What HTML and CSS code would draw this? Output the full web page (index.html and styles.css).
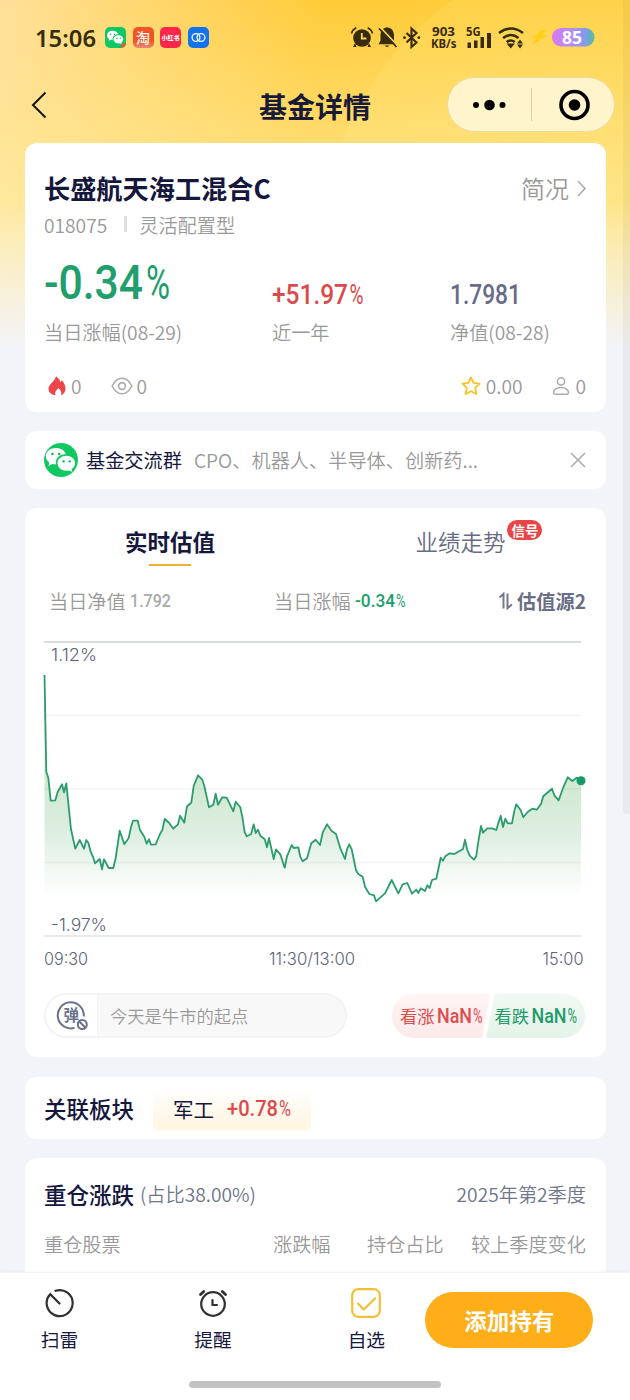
FILE: index.html
```
<!DOCTYPE html>
<html lang="zh-CN">
<head>
    <meta charset="UTF-8">
    <meta name="viewport" content="width=device-width, initial-scale=1.0">
    <title>基金详情</title>
    <link rel="stylesheet" href="styles.css">
</head>
<body>
    <svg class="defs" width="0" height="0" aria-hidden="true">
        <symbol id="wechat" viewBox="0 0 34 34">
            <circle cx="17" cy="17" r="17" fill="#10c862"/>
            <path fill="#fff" d="M11.5 5C5.700 5 1.800 8.700 1.800 13.200c0 2.600 1.400 4.900 3.500 6.300l-.9 3.500 3.900-2.100c1.200.3 2.500.4 3.700.3-1-6.100 4-10.200 9.900-9.900C21 7.500 16.700 5 11.500 5z"/>
            <path fill="#fff" d="M22.400 12.800c-5 0-8.900 3.300-8.900 7.500s3.900 7.500 8.900 7.500c1 0 2-.1 2.900-.4l3 1.600-.8-2.900c2.200-1.400 3.600-3.500 3.600-5.800 0-4.200-3.900-7.500-8.700-7.500z"/>
            <g fill="#10b75a"><circle cx="8.400" cy="11" r="1.300"/><circle cx="15.200" cy="11" r="1.300"/><circle cx="19.600" cy="18.400" r="1.200"/><circle cx="25.600" cy="18.400" r="1.200"/></g>
        </symbol>
    </svg>

    <header>
        <div class="status-bar">
            <svg class="clock" width="62" height="34"><text x="0" y="23.500" textLength="61" lengthAdjust="spacingAndGlyphs">15:06</text></svg>
            <div class="apps">
                <span class="app app-wechat">
                    <svg width="21" height="21" viewBox="-2 -2 38 38"><use href="#wechat" width="34" height="34"/></svg>
                    <i></i>
                </span>
                <span class="app app-tao">淘</span>
                <span class="app app-red">小红书</span>
                <span class="app app-blue">
                    <svg width="21" height="21" viewBox="0 0 21 21" fill="none" stroke="#fff" stroke-width="1.300"><circle cx="8" cy="10.500" r="3.900"/><circle cx="13" cy="10.500" r="3.900"/></svg>
                </span>
            </div>
            <svg class="signals" width="245" height="30" viewBox="350 23 245 30">
                <g fill="#372c0b">
                    <circle cx="362" cy="38" r="8.800"/>
                    <path d="M355 43l-2 4h3.500zM369 43l2 4h-3.500z"/>
                    <path d="M351.500 33.500q1-4 4.800-5.800M372.500 33.500q-1-4-4.800-5.800" fill="none" stroke="#372c0b" stroke-width="1.700"/>
                    <path d="M361.800 33v5.500h4.600" fill="none" stroke="#ffd658" stroke-width="1.800"/>
                    <path d="M387 27.200c-4.500.7-6.500 4.200-6.500 8v5.300l-2 3.800h17.500l-2-3.800v-5.300c0-3.800-2-7.300-7-8zM384.500 45.500h5q-2.500 2.800-5 0z"/>
                    <path d="M380.500 27.500l17.500 18.500" stroke="#ffd658" stroke-width="1.800"/>
                    <path d="M379 28.500l17.500 18.500" stroke="#372c0b" stroke-width="1.800"/>
                    <path d="M406.500 33l10 9.500-5 4.500v-18.500l5 4.500-10 9.500" fill="none" stroke="#372c0b" stroke-width="2.100"/>
                    <circle cx="404.500" cy="37.700" r="1.400"/><circle cx="418.800" cy="37.700" r="1.400"/>
                    <path d="M467.500 42.500h3.500V48h-3.500zM474 40.500h3.500V48H474zM480.500 37h3.500v11h-3.500zM487 33h4v15h-4z"/>
                    <path d="M506.500 43.500h8.500l-4.300 5z"/><path d="M520 38.500l3 4h-6zM520 47.500l3-4h-6z" transform="translate(0 1)"/>
                </g>
                <path d="M499 33q12-9 24 0M503 38q8-6 15.500 0M506.700 42q4-3 8 0" fill="none" stroke="#372c0b" stroke-width="2.600"/>
                <path d="M541 30h6l-5 5h5l-15 10 4-7h-5l3-2 2 0z" fill="#ffd014"/>
                <g class="mini">
                    <text x="432" y="36" font-size="12" textLength="23" lengthAdjust="spacingAndGlyphs">903</text>
                    <text x="431" y="48" font-size="11.500" textLength="25.500" lengthAdjust="spacingAndGlyphs">KB/s</text>
                    <text x="466" y="35.500" font-size="12" textLength="14.500" lengthAdjust="spacingAndGlyphs">5G</text>
                </g>
                <defs><linearGradient id="bat"><stop offset="0" stop-color="#da78f4"/><stop offset=".45" stop-color="#b48cf5"/><stop offset=".8" stop-color="#819be9"/><stop offset=".9" stop-color="#5db5b8"/><stop offset="1" stop-color="#66b9a4"/></linearGradient></defs>
                <rect x="552" y="28" width="42.500" height="18.500" rx="9" fill="url(#bat)"/>
                <text class="bat-text" x="562" y="43.500" textLength="20" lengthAdjust="spacingAndGlyphs">85</text>
            </svg>
        </div>
        <div class="nav-bar">
            <svg class="back" width="16" height="28" viewBox="0 0 16 28" fill="none" stroke="#15151d" stroke-width="2"><path d="M14.500 1.500L2 14l12.500 12.500"/></svg>
            <h1>基金详情</h1>
            <div class="capsule">
                <svg width="83" height="54"><circle cx="28" cy="27" r="3" /><circle cx="41.500" cy="27" r="5.300"/><circle cx="54.500" cy="27" r="3"/></svg>
                <span class="capsule-line"></span>
                <svg width="82" height="54"><circle cx="42.500" cy="27" r="13.500" fill="none" stroke="#000" stroke-width="3.600"/><circle cx="42.500" cy="27" r="5.800"/></svg>
            </div>
        </div>
    </header>

    <main>
        <section class="card summary">
            <div class="fund-head">
                <h2>长盛航天海工混合C</h2>
                <a class="more">简况<svg width="11" height="20" viewBox="0 0 11 20" fill="none" stroke="#aaa" stroke-width="1.600"><path d="M2 3l7 7.500L2 18"/></svg></a>
            </div>
            <div class="fund-code"><span>018075</span><i></i><span>灵活配置型</span></div>
            <div class="figures">
                <div class="figure">
                    <svg class="num green" width="130" height="46"><text x="0" y="39" font-size="49" textLength="99" lengthAdjust="spacingAndGlyphs">-0.34</text><text class="pct" x="102" y="39" font-size="49" textLength="24" lengthAdjust="spacingAndGlyphs">%</text></svg>
                    <p>当日涨幅(08-29)</p>
                </div>
                <div class="figure">
                    <svg class="num red" width="95" height="25"><text x="0" y="23" font-size="28" textLength="76" lengthAdjust="spacingAndGlyphs">+51.97</text><text class="pct" x="77.500" y="23" font-size="28" textLength="14" lengthAdjust="spacingAndGlyphs">%</text></svg>
                    <p>近一年</p>
                </div>
                <div class="figure">
                    <svg class="num slate" width="95" height="25"><text x="0" y="23" font-size="28" textLength="71" lengthAdjust="spacingAndGlyphs">1.7981</text></svg>
                    <p>净值(08-28)</p>
                </div>
            </div>
            <div class="stats">
                <svg width="18" height="20" viewBox="0 0 18 20"><path fill="#ed4549" d="M8 0c1.300 2 4.300 3.200 4.300 6.300 1-.6 1.300-1.600 1.400-2.400 2 2.300 3.800 5.400 3.800 8.600 0 3.300-1.700 5.600-4.600 6.700 1.300-3-.4-5-2.500-7.400-.5 2-2.800 2.400-3.200 4.500-.3 1.200.1 2.100.4 3C3 18.500.5 16.200.5 12.700.5 8.400 7.600 5 8 0z"/></svg>
                <span class="hot-count">0</span>
                <svg width="22" height="18" viewBox="0 0 22 18" fill="none" stroke="#aaa" stroke-width="1.600"><path d="M1.200 9Q5 1.200 11 1.200T20.800 9Q17 16.800 11 16.800T1.200 9z"/><circle cx="11" cy="9" r="3.400"/></svg>
                <span class="view-count">0</span>
                <svg class="star" width="20" height="20" viewBox="0 0 20 20" fill="none" stroke="#f7c41f" stroke-width="1.800" stroke-linejoin="round"><path d="M10 1.500l2.600 5.400 6 .8-4.400 4.200 1.100 6.100L10 15.200 4.700 18l1.100-6.100L1.400 7.700l6-.8z"/></svg>
                <span class="star-count">0.00</span>
                <svg width="18" height="20" viewBox="0 0 18 20" fill="none" stroke="#aaa" stroke-width="1.500"><circle cx="9" cy="5.300" r="3.600"/><path d="M1.500 16.500c0-2.500 3-5 7.500-5s7.500 2.500 7.500 5q0 1.700-1.600 1.700H3.100q-1.600 0-1.600-1.700z"/></svg>
                <span>0</span>
            </div>
        </section>

        <section class="card group">
            <svg width="34" height="34"><use href="#wechat" width="34" height="34"/></svg>
            <b>基金交流群</b>
            <span>CPO、机器人、半导体、创新药...</span>
            <svg class="close" width="16" height="16" viewBox="0 0 16 16" stroke="#aaa" stroke-width="1.500"><path d="M1 1l14 14M15 1L1 15"/></svg>
        </section>

        <section class="card estimate">
            <div class="tabs">
                <div class="tab active">实时估值</div>
                <div class="tab"><span class="tab-label">业绩走势<em>信号</em></span></div>
            </div>
            <div class="quote">
                <span class="quote-nav">当日净值 <svg class="num grey" width="44" height="20"><text x="0" y="15" font-size="18" textLength="41" lengthAdjust="spacingAndGlyphs">1.792</text></svg></span>
                <span class="quote-rate">当日涨幅 <svg class="num green" width="54" height="20"><text x="0" y="15" font-size="18" textLength="40" lengthAdjust="spacingAndGlyphs">-0.34</text><text class="pct" x="41" y="15" font-size="18" textLength="9.500" lengthAdjust="spacingAndGlyphs">%</text></svg></span>
                <span class="source"><svg width="16" height="18" viewBox="0 0 16 18" fill="none" stroke="#74788f" stroke-width="2"><path d="M1.500 5.500l4-3.700V16.500M9.500 1.500v14.700L14 12.500"/></svg>估值源2</span>
            </div>
            <svg class="chart" width="545" height="330" viewBox="0 0 545 330">
                <defs>
                    <linearGradient id="area" gradientUnits="userSpaceOnUse" x1="0" y1="130" x2="0" y2="256">
                        <stop offset="0" stop-color="#48ab50" stop-opacity=".28"/>
                        <stop offset=".5" stop-color="#48a458" stop-opacity=".18"/>
                        <stop offset="1" stop-color="#48a458" stop-opacity="0"/>
                    </linearGradient>
                </defs>
                <path d="M0 1h537" stroke="#cbd0d4" stroke-width="1.600"/>
                <path d="M0 74.500h537M0 148h537M0 221.500h537" stroke="#f2f3f4" stroke-width="1.500"/>
                <path d="M0 295h537" stroke="#dfe2e5" stroke-width="1.600"/>
                <path id="fill" fill="url(#area)"/>
                <polyline id="line" fill="none" stroke="#2c9c6d" stroke-width="1.800" stroke-linejoin="round" points="0.5,34 2.3,130.7 4.3,136.7 6.7,159.7 11.3,159.3 13.7,151 18,143.3 20,151.3 22.3,142.3 27,188.3 31.3,207.7 35.7,199 40,207.7 42.3,199 44.3,201.7 46.7,210.7 49.3,216.7 51,222.3 55.7,218 58,228.3 60,218.3 64.7,227 69.3,227 71.7,217 75.7,189.7 80.3,203.3 84.7,197 87,186 89,179.7 93.7,179.7 96,189 100.3,195.7 102.7,202.7 105,198.3 107,203.7 111.7,203.3 116,193 118.3,189 120.7,178 125,181.7 129.3,187.7 134,183.3 136,174.7 140.3,181.7 143,165.3 147.3,161.7 149.7,145 154,134.3 158.3,138.7 160.3,145 165,166.3 169.3,163.7 171.7,152.7 174,163.7 178.3,156.3 182.7,156.7 189.3,170.3 191.7,160.7 196.3,166.3 198.3,175.7 200.7,191.3 202.7,195.3 207,193.3 209.7,183.3 211.7,192 214,188.7 216.3,194.7 220.7,198.3 223,206.3 225,197 229.7,218 232,208.3 236.3,213.3 240.7,226.7 243,215.3 247.7,204 249.7,207 254.3,206.3 256.3,215.7 258.7,220.3 263,217.3 267.3,202.3 271.7,198.7 276,204 278.7,191.7 283,183.3 287.7,190 292,193 296.3,207.3 301,218 303,208.3 305.3,203.3 307.7,208.3 312,229.3 314.3,233 318.7,235.7 321,245.7 325.3,253 330,254.3 332,260.3 341,252.3 347.7,239 354.3,252.3 358.7,243.3 363.3,242 368,252.7 372.3,248.7 374.3,252 376.7,247.3 381,250 383.3,244.3 385.7,247 388,239 392.3,237.7 396.7,216.7 399,219.7 401.3,215.3 405.7,212.3 410.3,213 419,208 421,198.7 423.3,209 425.7,214.7 430,218.7 432.3,215 434.3,200.7 437,185 439,191.7 443.3,187.3 448,187.3 452.3,189 454.7,180.7 456.7,174.7 459,186 461.3,177.7 463.7,182.3 468,182.3 470.3,170 472.3,163.3 476.7,169.3 479.3,176.3 483.7,171 488.3,167.7 492.7,168.7 497,163 499.3,155.3 508,147.7 510.3,154.3 514.7,159.3 519.3,146.3 523.7,136.3 528.3,140 532.7,136.7 537,139.7"/>
                <circle cx="537" cy="139.700" r="4.500" fill="#149b68"/>
                <g class="axis">
                    <text x="7" y="19.500" textLength="46" lengthAdjust="spacingAndGlyphs">1.12%</text>
                    <text x="7" y="289.500" textLength="56" lengthAdjust="spacingAndGlyphs">-1.97%</text>
                    <text x="0" y="324" textLength="44" lengthAdjust="spacingAndGlyphs">09:30</text>
                    <text x="225" y="324" textLength="86" lengthAdjust="spacingAndGlyphs">11:30/13:00</text>
                    <text x="498.500" y="324" textLength="41" lengthAdjust="spacingAndGlyphs">15:00</text>
                </g>
            </svg>
            <div class="bottom-row">
                <div class="danmu">
                    <span class="danmu-icon">
                        <svg width="32" height="30" viewBox="0 0 32 30" fill="none" stroke="#6b728b" stroke-width="2"><path d="M27.700 15.500A13 13 0 1 0 18.500 26.800"/><circle cx="26.300" cy="23.500" r="4.500"/><path d="M23.300 20.500l6 6"/><text x="7.500" y="20">弹</text></svg>
                    </span>
                    <span class="danmu-input">今天是牛市的起点</span>
                </div>
                <svg class="vote" width="195" height="46" viewBox="0 0 195 46">
                    <defs>
                        <linearGradient id="up" x2="0" y2="1"><stop offset="0" stop-color="#fff4f4"/><stop offset="1" stop-color="#fde9e9"/></linearGradient>
                        <linearGradient id="down" x2="0" y2="1"><stop offset="0" stop-color="#f1f9f3"/><stop offset="1" stop-color="#e4f3e9"/></linearGradient>
                    </defs>
                    <path d="M23 .5H97q2 0 1.700 2L91.500 43q-.4 2-2.500 2H23A22 22 0 0 1 23 .5z" fill="url(#up)"/>
                    <path d="M106 .5h66A22 22 0 0 1 172 45H97q-2 0-1.700-2L103.500 2.500q.5-2 2.500-2z" fill="url(#down)"/>
                    <g fill="#df4c4e"><text class="cn" x="9" y="30">看涨</text><text class="nan" x="46" y="29.500" textLength="35" lengthAdjust="spacingAndGlyphs">NaN</text><text class="nan thin" x="82" y="29.500" textLength="9.500" lengthAdjust="spacingAndGlyphs">%</text></g>
                    <g fill="#229b6a"><text class="cn" x="103.500" y="30">看跌</text><text class="nan" x="140.500" y="29.500" textLength="35" lengthAdjust="spacingAndGlyphs">NaN</text><text class="nan thin" x="176.500" y="29.500" textLength="9.500" lengthAdjust="spacingAndGlyphs">%</text></g>
                </svg>
            </div>
        </section>

        <section class="card sector">
            <h3>关联板块</h3>
            <div class="sector-tag">军工<svg class="num red" width="65" height="24"><text x="0" y="19" font-size="22" textLength="51" lengthAdjust="spacingAndGlyphs">+0.78</text><text class="pct" x="52" y="19" font-size="22" textLength="12" lengthAdjust="spacingAndGlyphs">%</text></svg></div>
        </section>

        <section class="card holdings">
            <div class="holdings-head"><h3>重仓涨跌</h3><span>(占比38.00%)</span><span class="season">2025年第2季度</span></div>
            <div class="holdings-cols"><span>重仓股票</span><span>涨跌幅</span><span>持仓占比</span><span>较上季度变化</span></div>
        </section>
    </main>

    <footer>
        <div class="actions">
            <a class="action">
                <svg width="30" height="30" viewBox="0 0 30 30" fill="none" stroke="#303030" stroke-width="2.200" stroke-linecap="round"><path d="M11.500 2.800A13 13 0 1 1 6.200 6.200L15.500 15.500"/></svg>
                扫雷
            </a>
            <a class="action">
                <svg width="30" height="30" viewBox="0 0 30 30" fill="none" stroke="#303030" stroke-width="2.200" stroke-linecap="round"><circle cx="15" cy="16" r="11.800"/><path d="M2.500 6.500l3.200-3M27.500 6.500l-3.200-3" stroke-width="2.800"/><path d="M14.500 12v5h4.500"/></svg>
                提醒
            </a>
            <a class="action">
                <svg width="30" height="30" viewBox="0 0 30 30" fill="none" stroke="#efc037" stroke-width="2.200" stroke-linecap="round" stroke-linejoin="round"><rect x="1.200" y="1.200" width="27.600" height="27.600" rx="6"/><path d="M7 15.500l5.800 6L24 10.500"/></svg>
                自选
            </a>
            <a class="add-button">添加持有</a>
        </div>
        <div class="home-bar"></div>
    </footer>
    <div class="scroll-shade"></div>

    <script>
        // area under the line, closed at the bottom of the fade
        const pts = document.getElementById('line').getAttribute('points');
        document.getElementById('fill').setAttribute('d', 'M' + pts.split(' ').join(' L') + ' L537,256 L0.5,256 Z');
    </script>
</body>
</html>
```
FILE: styles.css
```
* { box-sizing: border-box; }
body {
    margin: 0; width: 630px; height: 1400px; overflow: hidden; position: relative;
    display: flex; flex-direction: column;
    font-family: "Noto Sans CJK SC", sans-serif; font-weight: 350; font-size: 19.2px; line-height: 28px; color: #15173d;
    background:
        linear-gradient(to bottom, rgba(243,244,250,0) 200px, #f3f4fa 350px),
        radial-gradient(circle at 640px 260px, rgba(255,240,150,.16) 320px, transparent 321px),
        linear-gradient(to bottom, rgba(255,240,184,0) 0, rgba(255,234,155,.6) 150px, rgba(255,238,170,.8) 260px),
        linear-gradient(100deg, #ffe09a 0, #ffcb37 320px, #ffcd3c 630px);
    background-color: #f3f4fa;
}
h1, h2, h3, p { margin: 0; }
svg { display: block; flex: none; }
.defs { position: absolute; }

header { height: 143px; flex: none; padding-top: 23px; }
.status-bar { display: flex; height: 30px; padding-left: 35px; }
.clock text { font: 600 24px "Noto Sans", sans-serif; fill: #372c0b; }
.apps { display: flex; gap: 6.500px; margin: 4px 0 0 8px; }
.app { width: 21px; height: 21px; border-radius: 5px; overflow: hidden; color: #fff; text-align: center; position: relative; }
.app-wechat { background: #10c862; }
.app-wechat i { position: absolute; right: -3px; bottom: -3px; width: 8px; height: 8px; border-radius: 50%; background: #dc5a3c; }
.app-tao { background: linear-gradient(#f05422 65%, #e98a72); font-size: 14px; line-height: 20px; font-weight: 500; }
.app-red { background: #fb2649; font-size: 6px; line-height: 21px; font-weight: 900; white-space: nowrap; }
.app-blue { background: #1472ec; }
.signals { margin-left: auto; margin-right: 35px; }
.mini text { font-family: "Noto Sans", sans-serif; font-weight: 700; fill: #372c0b; }
.bat-text { font: 700 17px "Noto Sans", sans-serif; fill: #fff; }
.nav-bar { display: grid; grid-template-columns: 228px 1fr 168px; align-items: center; height: 54px; margin: 24px 15px 0 31px; }
.nav-bar h1 { font-size: 28px; line-height: 40px; font-weight: 700; color: #191a37; padding-top: 2px; }
.capsule { display: flex; align-items: center; width: 168px; height: 55px; border: 1px solid #eadba0; border-radius: 28px; background: rgba(255,250,228,.8); }
.capsule-line { flex: none; width: 1px; height: 33px; background: #d9d0ac; }

main { flex: 1; min-height: 0; overflow: hidden; padding: 0 24.500px; }
.card { background: #fff; border-radius: 12px; margin-bottom: 19px; padding: 0 19.500px; }

.summary { height: 269px; padding-top: 26px; }
.fund-head { display: flex; justify-content: space-between; height: 38px; line-height: 38px; }
.fund-head h2 { font-size: 26.200px; font-weight: 700; }
.more { display: flex; align-items: center; gap: 7px; font-size: 24px; color: #999; }
.more svg { margin-right: -1px; }
.fund-code { display: flex; align-items: center; height: 36px; color: #999; }
.fund-code i { width: 3px; height: 16px; background: #dedede; margin: 0 12px 2px 17px; }
.figures { display: grid; grid-template-columns: 228px 178px 1fr; align-items: end; height: 103px; color: #999; }
.figure p { margin-top: 12px; }
.num { display: inline-block; vertical-align: middle; overflow: visible; }
.figure .num { display: block; }
.num text { font-family: Roboto, sans-serif; font-weight: 500; }
.num .pct { font-weight: 400; }
.green { fill: #209e6b; }
.red { fill: #db4a4c; }
.slate { fill: #666c88; }
.grey { fill: #aaa; }
.stats { display: flex; align-items: center; height: 28px; margin: 26px 0 0 4px; color: #999; }
.stats span { margin-left: 5px; }
.stats .hot-count { margin-right: 29px; }
.stats .view-count { margin-left: 4px; }
.stats .star { margin-left: auto; }
.stats .star-count { margin-right: 30px; }

.group { display: flex; align-items: center; height: 58px; color: #999; }
.group b { font-weight: 400; color: #15173d; margin: 0 12px 0 8px; }
.group .close { margin-left: auto; }

.estimate { height: 549px; }
.tabs { display: grid; grid-template-columns: 252px 1fr; height: 67px; font-size: 22.500px; line-height: 66px; text-align: center; color: #666a83; }
.tab.active { font-weight: 700; color: #15173d; background: linear-gradient(#f0b032, #f0b032) center 56px / 42px 2px no-repeat; }
.tab:last-child { padding-left: 39px; }
.tab-label { position: relative; }
.tab em { position: absolute; left: 92px; top: -5px; width: 35px; height: 20px; border-radius: 10px; background: #ea4446; color: #fff; font: 700 13.500px/20px "Noto Sans CJK SC", sans-serif; }
.quote { display: grid; grid-template-columns: 225px 1fr auto; height: 66px; line-height: 52px; padding-left: 5px; color: #999; }
.quote .num { margin-top: -4px; }
.source { display: flex; align-items: center; gap: 3px; height: 52px; font-weight: 700; color: #696d86; }
.chart { overflow: visible; }
.axis text { font: 300 17px Inter, sans-serif; fill: #5d6279; }
.bottom-row { display: flex; justify-content: space-between; margin-top: 22px; }
.danmu { display: flex; width: 303px; height: 45px; border: 2px solid #f3f3f3; border-radius: 23px; overflow: hidden; background: #f8f8f8; font-size: 17.300px; line-height: 42px; color: #999; }
.danmu-icon { width: 52px; background: #fff; padding: 6px 0 0 10px; border-right: 1px solid #f3f3f3; }
.danmu-icon text { font-size: 15.500px; font-weight: 700; fill: #6b728b; stroke: none; }
.danmu-input { padding-left: 12px; }
.vote .cn { font-size: 17.300px; font-weight: 400; }
.vote .nan { font: 500 20px Roboto, sans-serif; }
.vote .thin { font-weight: 400; }

.sector { display: flex; align-items: center; height: 62px; margin-top: 20px; }
h3 { font-size: 22.500px; font-weight: 500; }
.sector-tag { display: flex; align-items: center; gap: 13px; height: 42px; margin: 1px 0 0 19px; padding: 0 19px 0 20px; border-radius: 5px; font-size: 20.500px; font-weight: 400; background: linear-gradient(#fff, #fff4df); }

.holdings { height: 200px; padding-top: 18px; }
.holdings-head { display: flex; align-items: center; height: 36px; color: #70758b; }
.holdings-head h3 { color: #15173d; margin-right: 6px; }
.season { margin-left: auto; }
.holdings-cols { display: grid; grid-template-columns: 229px 94px 103px 1fr; margin-top: 18px; color: #999; white-space: nowrap; }
.holdings-cols span:last-child { text-align: right; }

footer { height: 128px; flex: none; background: #fff; border-top: 1px solid #f2f2f4; box-shadow: 0 -1px 3px rgba(0,0,0,.03); position: relative; }
.actions { display: flex; height: 107px; padding: 15px 37px 0 40px; }
.action { display: flex; flex-direction: column; align-items: center; width: 39px; margin-right: 114.500px; gap: 7px; font-size: 18.700px; font-weight: 400; white-space: nowrap; }
.action:nth-child(3) { margin-right: 39.500px; }
.add-button { width: 168px; height: 56px; margin-top: 4px; border-radius: 28px; background: #fdae18; color: #fff; font-size: 22.500px; line-height: 57px; font-weight: 700; text-align: center; }
.home-bar { width: 252px; height: 7px; border-radius: 4px; margin: 1px auto; background: #c2c2c2; }
.scroll-shade { position: absolute; top: 0; right: 0; width: 7px; height: 814px; border-radius: 0 0 0 4px; background: rgba(0,0,0,.04); }
```
